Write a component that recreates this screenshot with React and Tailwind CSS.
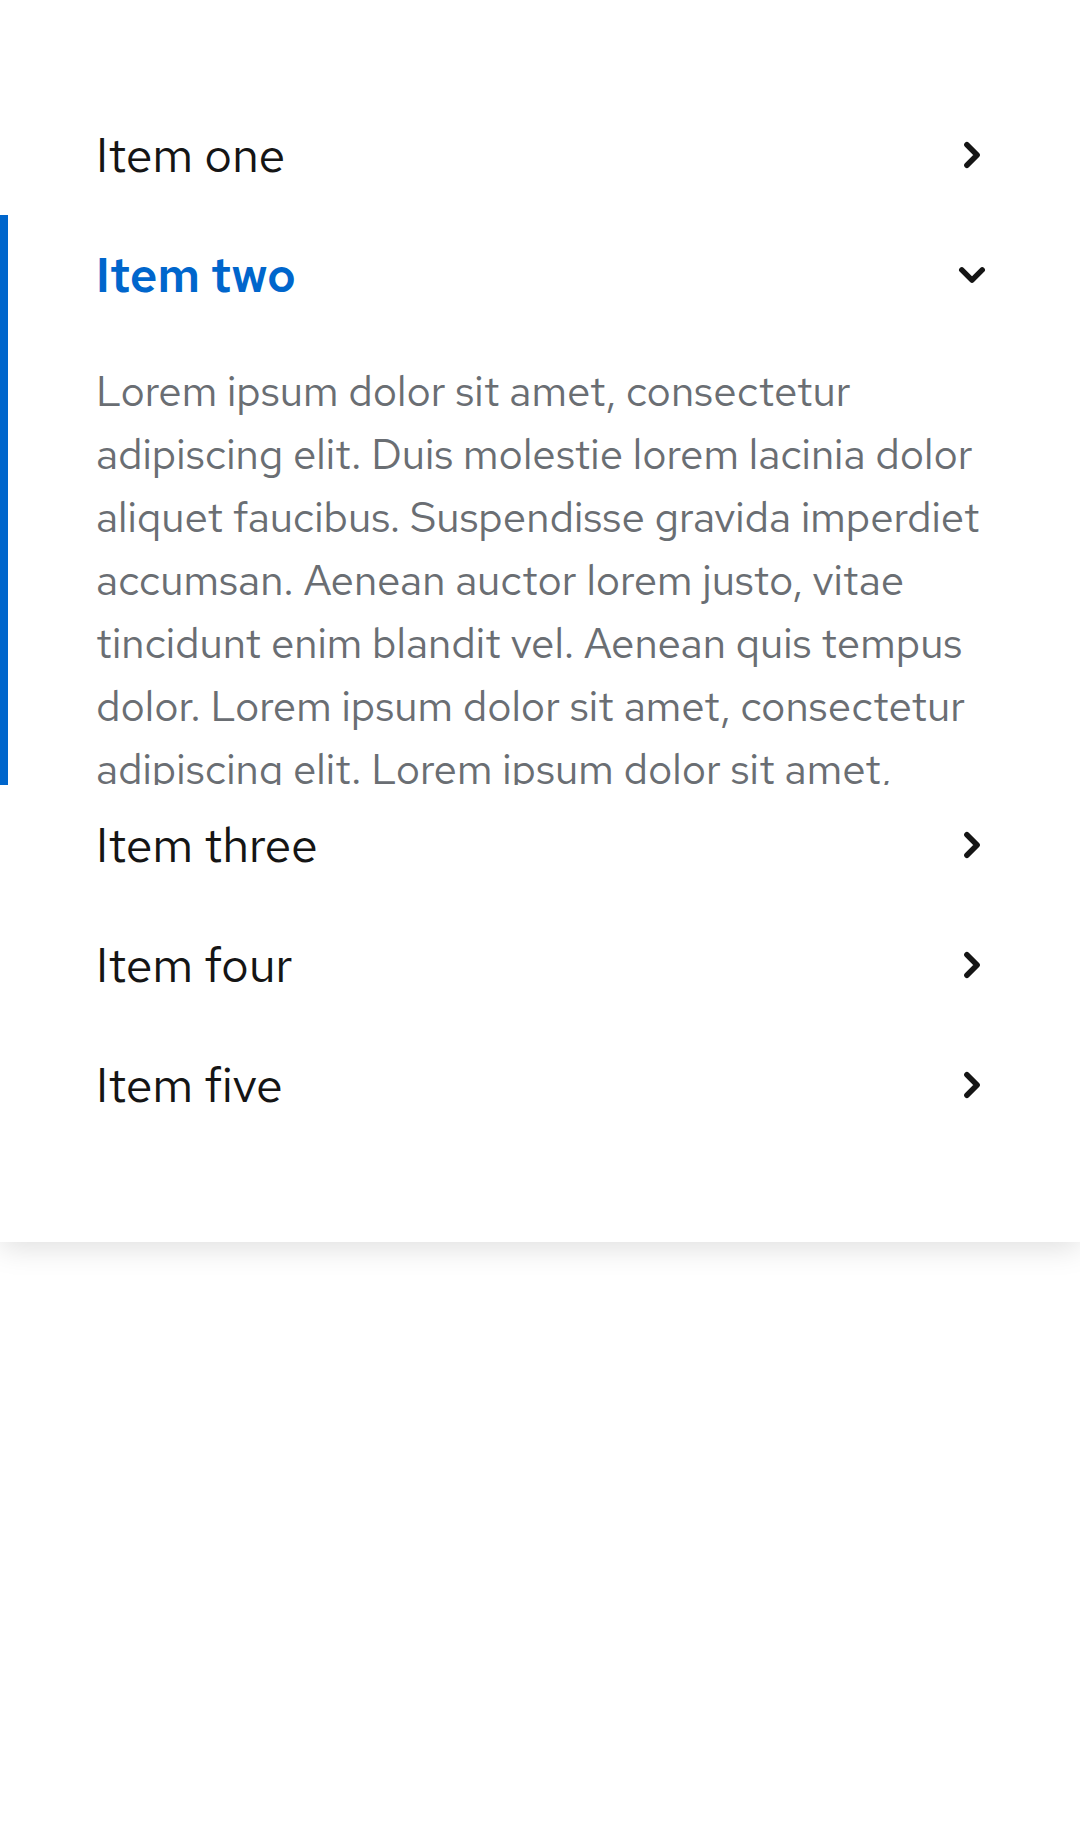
import React from "react";

const body =
  "Lorem ipsum dolor sit amet, consectetur adipiscing elit. Duis molestie lorem lacinia dolor aliquet faucibus. Suspendisse gravida imperdiet accumsan. Aenean auctor lorem justo, vitae tincidunt enim blandit vel. Aenean quis tempus dolor. Lorem ipsum dolor sit amet, consectetur adipiscing elit. Lorem ipsum dolor sit amet, consectetur adipiscing elit. Duis molestie lorem lacinia dolor aliquet faucibus.";

function ChevronRight() {
  return (
    <svg viewBox="0 0 30 30" className="h-[30px] w-[30px]">
      <path
        d="M9 3 L21 15 L9 27"
        fill="none"
        stroke="#151515"
        strokeWidth="6.5"
        strokeLinecap="round"
        strokeLinejoin="round"
        transform="translate(15 15) scale(0.85) translate(-15 -15)"
      />
    </svg>
  );
}

function ChevronDown() {
  return (
    <svg viewBox="0 0 30 30" className="h-[30px] w-[30px]">
      <path
        d="M3 9 L15 21 L27 9"
        fill="none"
        stroke="#151515"
        strokeWidth="6.5"
        strokeLinecap="round"
        strokeLinejoin="round"
        transform="translate(15 15) scale(0.85) translate(-15 -15)"
      />
    </svg>
  );
}

function Row({ label }) {
  return (
    <div className="flex h-[120px] items-center justify-between pl-[96px] pr-[93px]">
      <span className="text-[48px] text-[#151515]">{label}</span>
      <ChevronRight />
    </div>
  );
}

export default function App() {
  return (
    <div
      className="min-h-screen bg-white"
      style={{ fontFamily: '"Red Hat Text", Lato, "Noto Sans", sans-serif' }}
    >
      <div className="bg-white pt-[95px] pb-[97px] shadow-[0_6px_28px_rgba(0,0,0,0.13)]">
        <Row label="Item one" />

        {/* expanded */}
        <div className="border-l-[8px] border-[#0066cc]">
          <div className="flex h-[120px] items-center justify-between pl-[88px] pr-[93px]">
            <span className="text-[48px] font-semibold text-[#0066cc]">Item two</span>
            <ChevronDown />
          </div>
          <div className="h-[450px] overflow-hidden pl-[88px] pr-[80px] pt-[25px]">
            <p className="text-[42px] leading-[63px] text-[#6a6e73]">{body}</p>
          </div>
        </div>

        <Row label="Item three" />
        <Row label="Item four" />
        <Row label="Item five" />
      </div>
    </div>
  );
}
